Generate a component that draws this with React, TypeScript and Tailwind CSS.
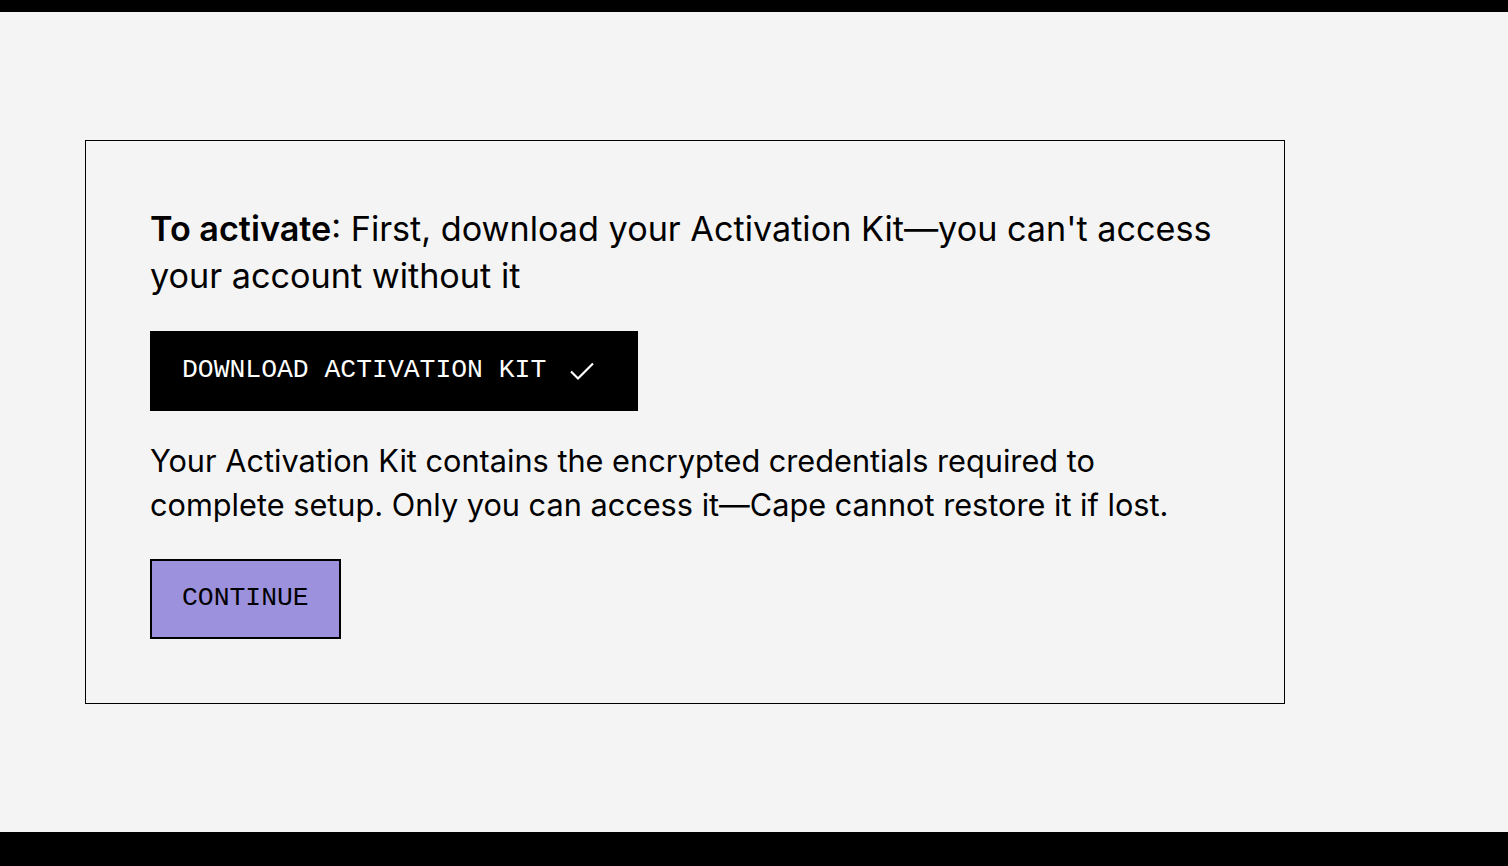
import React from 'react';

const Check: React.FC = () => (
  <svg width="24" height="20" viewBox="0 0 24 20" fill="none" className="ml-6">
    <path d="M1 10.5L8 17.5L23 2.5" stroke="white" strokeWidth="2.2" />
  </svg>
);

const App: React.FC = () => {
  return (
    <div className="min-h-[866px] flex flex-col bg-[#f4f4f4] font-['Inter',sans-serif] text-black">
      <div className="h-3 bg-black" />
      <main className="flex-1 pt-32 pl-[85px]">
        <div className="w-[1200px] border border-black p-16">
          <p className="text-[34.2px] leading-[47px]">
            <span className="font-semibold">To activate</span>: First, download your Activation Kit—you can't access
            <br />
            your account without it
          </p>
          <button className="mt-8 h-20 pl-8 pr-[44px] flex items-center bg-black text-white font-['Liberation_Mono',monospace] text-[26.4px]">
            DOWNLOAD ACTIVATION KIT
            <Check />
          </button>
          <p className="mt-7 text-[30.7px] leading-[44px]">
            Your Activation Kit contains the encrypted credentials required to
            <br />
            complete setup. Only you can access it—Cape cannot restore it if lost.
          </p>
          <button className="mt-8 h-20 px-[30px] border-2 border-black bg-[#9b91dd] font-['Liberation_Mono',monospace] text-[26.4px]">
            CONTINUE
          </button>
        </div>
      </main>
      <div className="h-[34px] bg-black" />
    </div>
  );
};

export default App;
